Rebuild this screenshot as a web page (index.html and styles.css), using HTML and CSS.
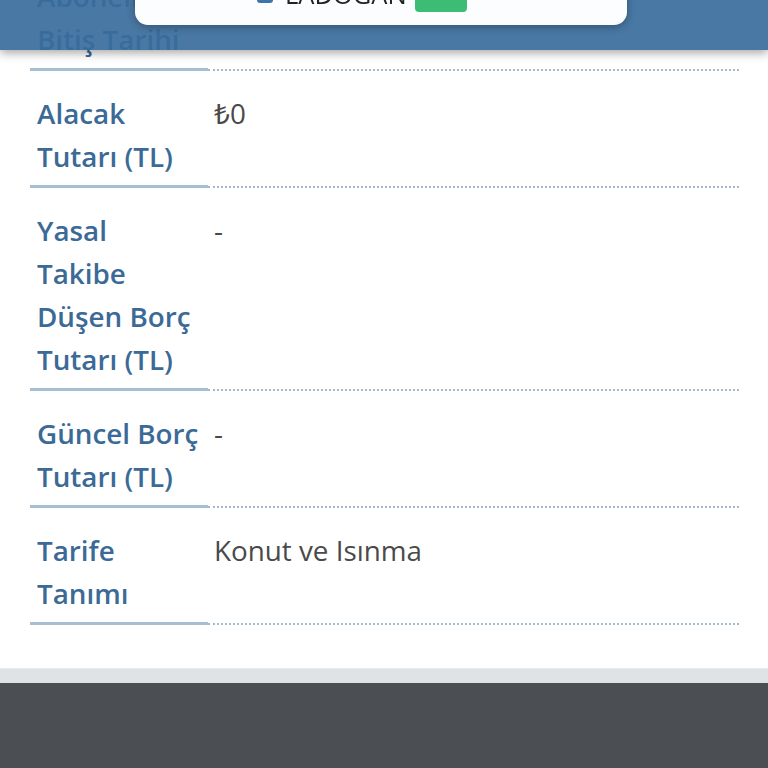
FILE: index.html
```html
<!DOCTYPE html>
<html lang="tr">
<head>
<meta charset="utf-8">
<title>Abonelik Detayı</title>
<link rel="stylesheet" href="styles.css">
</head>
<body>
<header class="topbar"></header>
<div class="popup">
  <span class="check"></span>
  <span class="popup-name">LADOGAN</span>
  <span class="badge"></span>
</div>
<main class="content">
  <div class="row">
    <div class="label">Abonelik Bitiş Tarihi</div>
    <div class="value"></div>
  </div>
  <div class="row">
    <div class="label">Alacak Tutarı (TL)</div>
    <div class="value">₺0</div>
  </div>
  <div class="row">
    <div class="label">Yasal Takibe Düşen Borç Tutarı (TL)</div>
    <div class="value">-</div>
  </div>
  <div class="row">
    <div class="label">Güncel Borç Tutarı (TL)</div>
    <div class="value">-</div>
  </div>
  <div class="row">
    <div class="label">Tarife Tanımı</div>
    <div class="value">Konut ve Isınma</div>
  </div>
</main>
<div class="strip"></div>
<footer class="footer"></footer>
</body>
</html>
```
FILE: styles.css
```css
html, body {
  margin: 0;
  padding: 0;
  background: #ffffff;
  font-family: "Open Sans", "Noto Sans", sans-serif;
  overflow: hidden;
}

.topbar {
  position: fixed;
  top: 0;
  left: 0;
  right: 0;
  height: 50px;
  background: rgba(58, 108, 156, 0.92);
  box-shadow: 0 3px 9px rgba(0, 0, 0, 0.35);
  z-index: 5;
}

.popup {
  position: fixed;
  left: 135px;
  top: -35px;
  width: 492px;
  height: 60px;
  background: #fcfdfe;
  border-radius: 0 0 13px 13px;
  box-shadow: 0 2px 8px rgba(0, 0, 0, 0.3);
  z-index: 6;
  display: flex;
  align-items: flex-end;
  box-sizing: border-box;
  padding-left: 122px;
  overflow: hidden;
}

.check {
  width: 16px;
  height: 16px;
  border-radius: 3px;
  background: #3f74ab;
  margin-bottom: 22px;
}

.popup-name {
  font-size: 25.5px;
  line-height: 1;
  color: #222;
  margin-left: 12px;
  margin-bottom: 18px;
}

.badge {
  width: 52px;
  height: 30px;
  border-radius: 4px;
  background: #3dbc75;
  margin-left: 8px;
  margin-bottom: 13px;
}

.content {
  margin: -46px 29px 0 30px;
  padding-bottom: 43px;
}

.row {
  display: flex;
}

.label {
  width: 178px;
  flex: none;
  box-sizing: border-box;
  padding: 21px 9px 7px 7px;
  font-size: 27.8px;
  line-height: 43px;
  font-weight: 600;
  color: #3b6a97;
  border-bottom: 3px solid #a7bfd4;
}

.value {
  flex: 1;
  padding: 21px 6px 7px 6px;
  font-size: 27.8px;
  line-height: 43px;
  color: #4a4a4a;
  border-bottom: 2px dotted #a3b8cb;
  margin-bottom: 0.5px;
}

.strip {
  height: 15px;
  background: #e0e3e6;
  border-top: 1px solid #e8eaec;
  box-sizing: border-box;
}

.footer {
  height: 160px;
  background: #4b4f53;
}
```
